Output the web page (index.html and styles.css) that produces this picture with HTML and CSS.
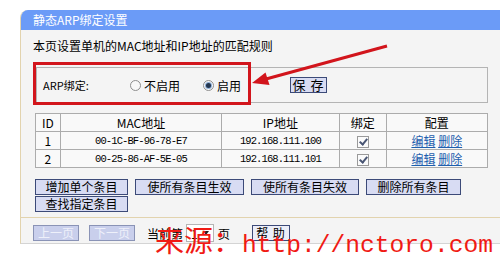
FILE: index.html
```html
<!DOCTYPE html>
<html>
<head>
    <meta charset="utf-8">
    <title>静态ARP绑定设置</title>
    <link rel="stylesheet" href="styles.css">
</head>
<body>
    <div class="panel">
        <div class="title">静态ARP绑定设置</div>
        <div class="intro">本页设置单机的MAC地址和IP地址的匹配规则</div>

        <div class="group">
            <span class="lbl">ARP绑定:</span>
            <span class="opt opt-off"><span class="radio"></span>不启用</span>
            <span class="opt opt-on"><span class="radio checked"></span>启用</span>
            <button class="btn btn-save">保 存</button>
        </div>

        <table class="list">
            <tr>
                <th class="c-id">ID</th>
                <th class="c-mac">MAC地址</th>
                <th class="c-ip">IP地址</th>
                <th class="c-bind">绑定</th>
                <th class="c-cfg">配置</th>
            </tr>
            <tr>
                <td>1</td>
                <td class="mono">00-1C-BF-96-78-E7</td>
                <td class="mono">192.168.111.100</td>
                <td><span class="check"></span></td>
                <td><a href="#">编辑</a> <a href="#">删除</a></td>
            </tr>
            <tr>
                <td>2</td>
                <td class="mono">00-25-86-AF-5E-05</td>
                <td class="mono">192.168.111.101</td>
                <td><span class="check"></span></td>
                <td><a href="#">编辑</a> <a href="#">删除</a></td>
            </tr>
        </table>

        <div class="actions">
            <button class="btn w1">增加单个条目</button>
            <button class="btn w2">使所有条目生效</button>
            <button class="btn w3">使所有条目失效</button>
            <button class="btn w4">删除所有条目</button>
            <button class="btn w1">查找指定条目</button>
        </div>

        <div class="footer">
            <button class="btn pg" disabled>上一页</button>
            <button class="btn pg" disabled>下一页</button>
            <span class="cur">当前第</span>
            <span class="select">1<span class="caret"></span></span>
            <span class="page">页</span>
            <button class="btn help">帮 助</button>
        </div>
    </div>

    <!-- annotation overlay -->
    <div class="mark"></div>
    <svg class="arrow" width="500" height="255" viewBox="0 0 500 255">
        <line x1="387" y1="46" x2="266" y2="79" stroke="#d2151c" stroke-width="3"/>
        <polygon points="252,83 265.5,72.5 269.5,85" fill="#d2151c"/>
    </svg>

    <div class="source">来源：<span class="url">http://nctoro.com</span></div>
</body>
</html>
```

FILE: styles.css
```css
body {
    margin: 0;
    background: #fff;
    font-family: "Noto Sans CJK SC", "Noto Sans", sans-serif;
    font-size: 12px;
    color: #000;
    overflow: hidden;
}

.panel {
    margin: 10px 0 0 20px;
    border-left: 1px solid #e2d3ae;
    border-bottom: 1px solid #d4d4d4;
    border-top-left-radius: 8px;
    background: #f4f4f4;
    overflow: hidden;
}

.title {
    height: 20px;
    line-height: 20px;
    padding-left: 12px;
    background: #6b9bf7;
    color: #fff;
}

.intro {
    padding: 10px 0 0 12px;
    height: 12px;
    line-height: 12px;
    margin-bottom: 15px;
}

.group {
    display: flex;
    align-items: center;
    height: 34px;
    margin: 0 12px 0 15px;
    border: 1px solid #b4b4b4;
}

.lbl {
    width: 87px;
    padding-left: 6px;
    font-size: 11px;
}

.opt {
    display: flex;
    align-items: center;
}

.opt-off {
    width: 73px;
}

.opt-on {
    width: 87px;
}

.radio {
    width: 9px;
    height: 9px;
    margin-right: 3px;
    border: 1px solid #8e8e8e;
    border-radius: 50%;
    background: #f8f8f8;
    position: relative;
}

.radio.checked::after {
    content: "";
    position: absolute;
    left: 2px;
    top: 2px;
    width: 5px;
    height: 5px;
    border-radius: 50%;
    background: #24364f;
    box-shadow: 0 0 0 1px #8fb0d8;
}

.btn {
    height: 16px;
    padding: 0;
    font-family: inherit;
    font-size: 12px;
    line-height: 14px;
    color: #000;
    background: #d8dcf3;
    border: 1px solid #3c4a78;
}

.btn-save {
    width: 37px;
    height: 16px;
    font-size: 13px;
    letter-spacing: 1px;
}

.list {
    margin: 10px 0 0 14px;
    width: 453px;
    border-collapse: collapse;
    background: #f9f9f9;
}

.list th,
.list td {
    height: 17px;
    padding: 0;
    border: 1px solid #acacac;
    text-align: center;
    font-weight: normal;
    line-height: 16px;
}

.c-id { width: 24px; }
.c-mac { width: 161px; }
.c-ip { width: 117px; }
.c-bind { width: 46px; }
.c-cfg { width: 101px; }

.mono {
    font-family: "Liberation Mono", monospace;
    font-size: 10.5px;
    letter-spacing: -0.9px;
}

.list a {
    color: #1d5fae;
    text-decoration: underline;
}

.check {
    display: inline-block;
    vertical-align: middle;
    width: 10px;
    height: 10px;
    border: 1px solid #9a9a9a;
    background: #fbfbfb;
    position: relative;
}

.check::after {
    content: "";
    position: absolute;
    left: 3px;
    top: 0px;
    width: 3px;
    height: 6px;
    border: solid #4a5674;
    border-width: 0 2px 2px 0;
    transform: rotate(40deg);
}

.actions {
    display: flex;
    flex-wrap: wrap;
    width: 440px;
    gap: 1px 7px;
    margin: 11px 0 0 14px;
}

.w1 { width: 93px; }
.w2 { width: 109px; }
.w3 { width: 108px; }
.w4 { width: 95px; }

.footer {
    display: flex;
    align-items: center;
    height: 20px;
    margin-top: 5px;
    padding: 5px 0 0 12px;
    border-top: 1px solid #e2d3ae;
}

.pg {
    width: 46px;
    margin-right: 10px;
    color: #eef0fa;
    background: #c9cfec;
    border-color: #8a93b6;
}

.cur {
    margin-left: 2px;
}

.select {
    display: flex;
    align-items: center;
    width: 22px;
    height: 16px;
    margin-left: 3px;
    padding-left: 4px;
    border: 1px solid #b5b5b5;
    background: #fff;
}

.caret {
    margin-left: 5px;
    border: 3px solid transparent;
    border-top: 4px solid #222;
    margin-top: 3px;
}

.page {
    margin-left: 4px;
}

.help {
    width: 38px;
    margin-left: 22px;
    letter-spacing: 1px;
    background: #eceef8;
}

.mark {
    position: absolute;
    left: 33px;
    top: 62px;
    width: 218px;
    height: 43px;
    box-sizing: border-box;
    border: 3px solid #d2151c;
}

.arrow {
    position: absolute;
    left: 0;
    top: 0;
}

.source {
    position: absolute;
    left: 155px;
    top: 222px;
    color: #f01a14;
    font-family: "Noto Sans CJK SC", sans-serif;
    font-size: 29px;
    line-height: 34px;
    white-space: nowrap;
}

.url {
    font-family: "Liberation Mono", monospace;
    font-size: 24.6px;
}
```
